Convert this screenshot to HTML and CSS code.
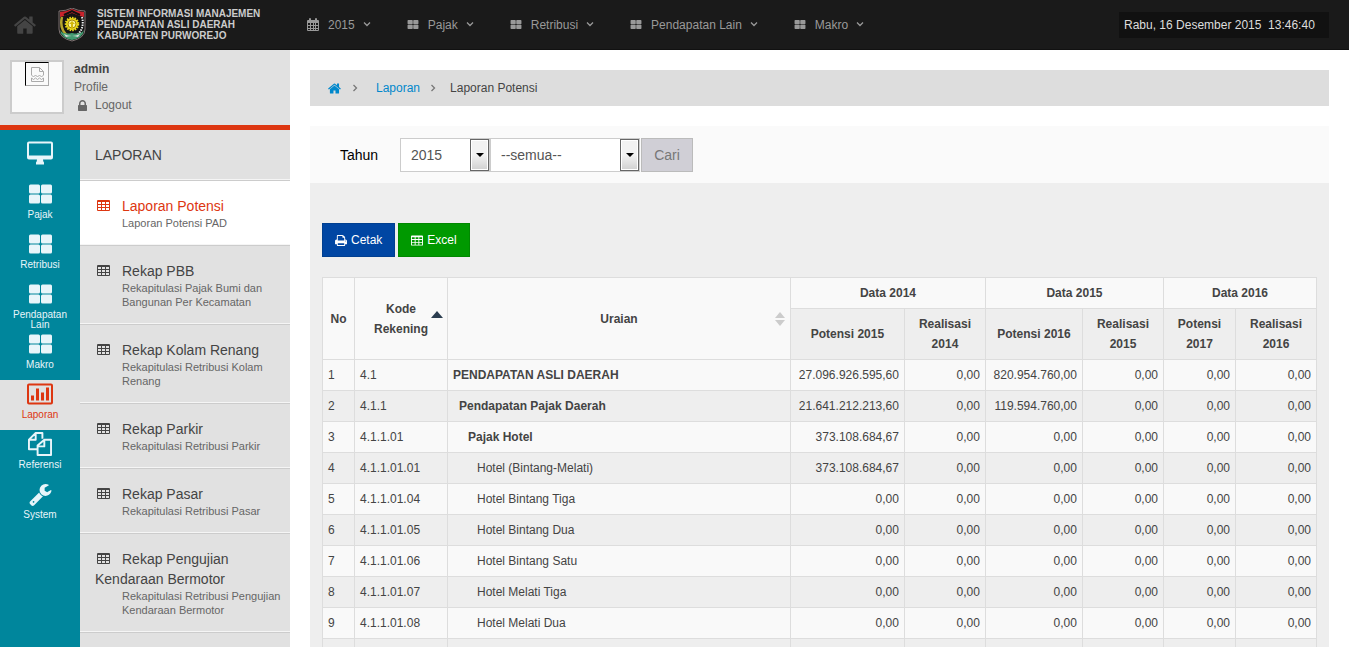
FILE: index.html
```
<!DOCTYPE html>
<html lang="id">

<head>
    <meta charset="utf-8">
    <meta name="viewport" content="width=device-width, initial-scale=1.0">
    <title>Laporan Potensi</title>
    <link rel="stylesheet" href="styles.css">
</head>

<body>

    <svg class="sprite" aria-hidden="true">
        <symbol id="i-home" viewBox="80 240 1640 1300"><path d="M1472 992v480q0 26-19 45t-45 19h-384v-384h-256v384h-384q-26 0-45-19t-19-45v-480q0-1 .5-3t.5-3l575-474 575 474q1 2 1 6zm223-69l-62 74q-8 9-21 11h-3q-13 0-21-7l-692-577-692 577q-12 8-24 7-13-2-21-11l-62-74q-8-10-7-23.5t11-21.5l719-599q32-26 76-26t76 26l244 204v-195q0-14 9-23t23-9h192q14 0 23 9t9 23v408l219 182q10 8 11 21.5t-7 23.5z"/></symbol>
        <symbol id="i-lock" viewBox="320 128 1152 1408"><path d="M640 768h512v-192q0-106-75-181t-181-75-181 75-75 181v192zm832 96v576q0 40-28 68t-68 28h-960q-40 0-68-28t-28-68v-576q0-40 28-68t68-28h32v-192q0-184 132-316t316-132 316 132 132 316v192h32q40 0 68 28t28 68z"/></symbol>
        <symbol id="i-print" viewBox="64 128 1664 1536"><path d="M448 1536h896v-256h-896v256zm0-640h896v-384h-160q-40 0-68-28t-28-68v-160h-640v640zm1152 64q0-26-19-45t-45-19-45 19-19 45 19 45 45 19 45-19 19-45zm128 0v416q0 13-9.5 22.5t-22.5 9.5h-224v160q0 40-28 68t-68 28h-960q-40 0-68-28t-28-68v-160h-224q-13 0-22.5-9.5t-9.5-22.5v-416q0-79 56.5-135.5t135.5-56.5h64v-544q0-40 28-68t68-28h672q40 0 88 20t76 48l152 152q28 28 48 76t20 88v256h64q79 0 135.5 56.5t56.5 135.5z"/></symbol>
        <symbol id="i-wrench" viewBox="80 128 1650 1650"><path d="M448 1472q0-26-19-45t-45-19-45 19-19 45 19 45 45 19 45-19 19-45zm644-420l-682 682q-37 37-90 37-52 0-91-37l-106-108q-38-36-38-90 0-53 38-91l681-681q39 98 114.5 173.5t173.5 114.5zm634-435q0 39-23 106-47 134-164.5 217.5t-258.5 83.5q-185 0-316.5-131.5t-131.5-316.5 131.5-316.5 316.5-131.5q58 0 121.5 16.5t107.5 46.5q16 11 16 28t-16 28l-293 169v224l193 107q5-3 79-48.5t135.5-81 70.5-35.5q15 0 23.5 10t8.500 25z"/></symbol>
        <symbol id="i-large" viewBox="0 0 23 19"><rect width="11" height="9" rx="1.5"/><rect x="12" width="11" height="9" rx="1.5"/><rect y="10" width="11" height="9" rx="1.5"/><rect x="12" y="10" width="11" height="9" rx="1.5"/></symbol>
        <symbol id="i-calendar" viewBox="0 0 12 13"><path fill-rule="evenodd" d="M1 2h1V1q0-1 1-1t1 1v1h4V1q0-1 1-1t1 1v1h1q1 0 1 1v9q0 1-1 1H1q-1 0-1-1V3q0-1 1-1zM1 5v2h2V5zm3 0v2h2V5zm3 0v2h1V5zm2 0v2h2V5zM1 8v2h2V8zm3 0v2h2V8zm3 0v2h1V8zm2 0v2h2V8zM1 11v1h2v-1zm3 0v1h2v-1zm3 0v1h1v-1zm2 0v1h2v-1z"/></symbol>
        <symbol id="i-table" viewBox="0 0 13 11"><path fill-rule="evenodd" d="M1 0h11q1 0 1 1v9q0 1-1 1H1q-1 0-1-1V1q0-1 1-1zM1 2v2h3V2zm4 0v2h3V2zm4 0v2h3V2zM1 5v2h3V5zm4 0v2h3V5zm4 0v2h3V5zM1 8v2h3V8zm4 0v2h3V8zm4 0v2h3V8z"/></symbol>
        <symbol id="i-desktop" viewBox="0 0 26 23"><path fill-rule="evenodd" d="M2 0h22q2 0 2 2v14q0 2-2 2h-8q0 2 1 3v2H9v-2q1-1 1-3H2q-2 0-2-2V2Q0 0 2 0zM2 2v12h22V2z"/></symbol>
        <symbol id="i-chart" viewBox="0 0 26 21"><path fill-rule="evenodd" d="M2 0h22q2 0 2 2v17q0 2-2 2H2q-2 0-2-2V2Q0 0 2 0zM2 2v17h22V2zM4 12h3v5H4zM9 5h3v12H9zM14 9h3v8h-3zM19 4h3v13h-3z"/></symbol>
        <symbol id="i-copy" viewBox="0 0 25 25"><path fill="none" stroke="currentColor" stroke-width="2" stroke-linejoin="round" d="M10 18H1V8l7-7h7v6M8 1v7H1M10 14l7-6h7v16H10zM17 8v7h-7"/></symbol>
        <symbol id="i-down" viewBox="0 0 8 5"><path fill="none" stroke="currentColor" stroke-width="1.3" d="M1 .5l3 3 3-3"/></symbol>
        <symbol id="i-right" viewBox="0 0 5 8"><path fill="none" stroke="currentColor" stroke-width="1.3" d="M.5 1l3 3-3 3"/></symbol>
    </svg>

    <header class="topbar">
        <a class="home" href="#" aria-label="Beranda"><svg><use href="#i-home"/></svg></a>
        <svg class="logo" viewBox="0 0 28 34" role="img" aria-label="Kabupaten Purworejo">
            <path d="M1 3q7 0 13-3 6 3 13 3v18q0 9-13 12Q1 30 1 21z" fill="#141414" stroke="#a99" stroke-width=".7"/>
            <path d="M2 4q6 0 12-3 6 3 12 3v5l-4-1-8-3-8 3-4 1z" fill="#c8242c"/>
            <path d="M6 7l8-4 8 4" fill="none" stroke="#111" stroke-width="2"/>
            <path d="M4 9q-3 12 6 19" fill="none" stroke="#b6a52d" stroke-width="2.5"/>
            <path d="M24 9q3 12-6 19" fill="none" stroke="#eee" stroke-width="2" stroke-dasharray="1.5 1"/>
            <path d="M2 22q3 5 12 3 9 2 12-3-1 8-12 10Q3 30 2 22z" fill="#439b70"/>
            <path d="M6 26q8 4 16 0l-2 3q-6-2-12 0z" fill="#ddd"/>
            <circle cx="14" cy="16" r="6" fill="#ead719" stroke="#ead719" stroke-width="2.5" stroke-dasharray="1.5 1"/>
            <circle cx="14" cy="16" r="4" fill="#f8f4a0" stroke="#a88b08"/>
            <path d="M14 13l3 3h-2v4h-2v-4h-2z" fill="#d3b80c"/>
        </svg>
        <div class="brand">SISTEM INFORMASI MANAJEMEN<br>PENDAPATAN ASLI DAERAH<br>KABUPATEN PURWOREJO</div>
        <nav class="topmenu">
            <a href="#"><svg class="cal"><use href="#i-calendar"/></svg>2015<svg class="down"><use href="#i-down"/></svg></a>
            <a href="#"><svg><use href="#i-large"/></svg>Pajak<svg class="down"><use href="#i-down"/></svg></a>
            <a href="#"><svg><use href="#i-large"/></svg>Retribusi<svg class="down"><use href="#i-down"/></svg></a>
            <a href="#"><svg><use href="#i-large"/></svg>Pendapatan Lain<svg class="down"><use href="#i-down"/></svg></a>
            <a href="#"><svg><use href="#i-large"/></svg>Makro<svg class="down"><use href="#i-down"/></svg></a>
        </nav>
        <div class="clock">Rabu, 16 Desember 2015&nbsp; 13:46:40</div>
    </header>

    <div class="page">
        <aside class="sidebar">
            <div class="profile">
                <div class="avatar">
                    <span class="photo">
                        <svg viewBox="0 0 13 15"><path fill="none" stroke="#aaa" d="M.5 8V.5h8l4 4V8M8.5.5v4h4M.5 8l2 2 2-2 2 2 2-2 2 2 2-2M.5 11v3.5h12V11l-2 1.5-2-1.5-2 1.5-2-1.5-2 1.5z"/></svg>
                    </span>
                </div>
                <div class="user">
                    <strong>admin</strong>
                    <a href="#">Profile</a>
                    <a href="#"><svg class="lock"><use href="#i-lock"/></svg>Logout</a>
                </div>
            </div>
            <div class="menus">
                <nav class="icons">
                    <a class="dashboard" href="#" aria-label="Dashboard"><svg class="wide"><use href="#i-desktop"/></svg></a>
                    <a href="#"><svg><use href="#i-large"/></svg><span>Pajak</span></a>
                    <a href="#"><svg><use href="#i-large"/></svg><span>Retribusi</span></a>
                    <a href="#"><svg><use href="#i-large"/></svg><span>Pendapatan Lain</span></a>
                    <a href="#"><svg><use href="#i-large"/></svg><span>Makro</span></a>
                    <a class="active" href="#"><svg class="wide"><use href="#i-chart"/></svg><span>Laporan</span></a>
                    <a href="#"><svg class="wide"><use href="#i-copy"/></svg><span>Referensi</span></a>
                    <a href="#"><svg class="wrench"><use href="#i-wrench"/></svg><span>System</span></a>
                </nav>
                <nav class="submenu">
                    <h2>LAPORAN</h2>
                    <a class="active" href="#"><svg><use href="#i-table"/></svg>Laporan Potensi<small>Laporan Potensi PAD</small></a>
                    <a href="#"><svg><use href="#i-table"/></svg>Rekap PBB<small>Rekapitulasi Pajak Bumi dan Bangunan Per Kecamatan</small></a>
                    <a href="#"><svg><use href="#i-table"/></svg>Rekap Kolam Renang<small>Rekapitulasi Retribusi Kolam Renang</small></a>
                    <a href="#"><svg><use href="#i-table"/></svg>Rekap Parkir<small>Rekapitulasi Retribusi Parkir</small></a>
                    <a href="#"><svg><use href="#i-table"/></svg>Rekap Pasar<small>Rekapitulasi Retribusi Pasar</small></a>
                    <a href="#"><svg><use href="#i-table"/></svg>Rekap Pengujian Kendaraan Bermotor<small>Rekapitulasi Retribusi Pengujian Kendaraan Bermotor</small></a>
                </nav>
            </div>
        </aside>

        <main>
            <nav class="breadcrumb">
                <a href="#" aria-label="Beranda"><svg class="crumb-home"><use href="#i-home"/></svg></a>
                <svg class="sep first"><use href="#i-right"/></svg>
                <a href="#">Laporan</a>
                <svg class="sep"><use href="#i-right"/></svg>
                <span>Laporan Potensi</span>
            </nav>

            <form class="filter">
                <label for="tahun">Tahun</label>
                <span class="select year">
                    <select id="tahun">
                        <option>2015</option>
                    </select>
                </span>
                <span class="select">
                    <select aria-label="Jenis">
                        <option>--semua--</option>
                    </select>
                </span>
                <button type="button">Cari</button>
            </form>

            <section class="report">
                <div class="actions">
                    <button class="cetak" type="button"><svg><use href="#i-print"/></svg>Cetak</button>
                    <button class="excel" type="button"><svg><use href="#i-table"/></svg>Excel</button>
                </div>

                <table>
                    <colgroup>
                        <col class="c-no">
                        <col class="c-kode">
                        <col>
                        <col class="c-total">
                        <col class="c-real">
                        <col class="c-pot">
                        <col class="c-real">
                        <col class="c-next">
                        <col class="c-real">
                    </colgroup>
                    <thead>
                        <tr>
                            <th rowspan="2">No</th>
                            <th rowspan="2" class="sort asc">Kode Rekening</th>
                            <th rowspan="2" class="sort both">Uraian</th>
                            <th colspan="2">Data 2014</th>
                            <th colspan="2">Data 2015</th>
                            <th colspan="2">Data 2016</th>
                        </tr>
                        <tr>
                            <th>Potensi 2015</th>
                            <th>Realisasi 2014</th>
                            <th>Potensi 2016</th>
                            <th>Realisasi 2015</th>
                            <th>Potensi 2017</th>
                            <th>Realisasi 2016</th>
                        </tr>
                    </thead>
                    <tbody>
                        <tr><td>1</td><td>4.1</td><td class="l1">PENDAPATAN ASLI DAERAH</td><td>27.096.926.595,60</td><td>0,00</td><td>820.954.760,00</td><td>0,00</td><td>0,00</td><td>0,00</td></tr>
                        <tr><td>2</td><td>4.1.1</td><td class="l2">Pendapatan Pajak Daerah</td><td>21.641.212.213,60</td><td>0,00</td><td>119.594.760,00</td><td>0,00</td><td>0,00</td><td>0,00</td></tr>
                        <tr><td>3</td><td>4.1.1.01</td><td class="l3">Pajak Hotel</td><td>373.108.684,67</td><td>0,00</td><td>0,00</td><td>0,00</td><td>0,00</td><td>0,00</td></tr>
                        <tr><td>4</td><td>4.1.1.01.01</td><td class="l4">Hotel (Bintang-Melati)</td><td>373.108.684,67</td><td>0,00</td><td>0,00</td><td>0,00</td><td>0,00</td><td>0,00</td></tr>
                        <tr><td>5</td><td>4.1.1.01.04</td><td class="l4">Hotel Bintang Tiga</td><td>0,00</td><td>0,00</td><td>0,00</td><td>0,00</td><td>0,00</td><td>0,00</td></tr>
                        <tr><td>6</td><td>4.1.1.01.05</td><td class="l4">Hotel Bintang Dua</td><td>0,00</td><td>0,00</td><td>0,00</td><td>0,00</td><td>0,00</td><td>0,00</td></tr>
                        <tr><td>7</td><td>4.1.1.01.06</td><td class="l4">Hotel Bintang Satu</td><td>0,00</td><td>0,00</td><td>0,00</td><td>0,00</td><td>0,00</td><td>0,00</td></tr>
                        <tr><td>8</td><td>4.1.1.01.07</td><td class="l4">Hotel Melati Tiga</td><td>0,00</td><td>0,00</td><td>0,00</td><td>0,00</td><td>0,00</td><td>0,00</td></tr>
                        <tr><td>9</td><td>4.1.1.01.08</td><td class="l4">Hotel Melati Dua</td><td>0,00</td><td>0,00</td><td>0,00</td><td>0,00</td><td>0,00</td><td>0,00</td></tr>
                        <tr><td>&nbsp;</td><td></td><td></td><td></td><td></td><td></td><td></td><td></td><td></td></tr>
                    </tbody>
                </table>
            </section>
        </main>
    </div>

</body>

</html>
```
FILE: styles.css
```
* {
    box-sizing: border-box;
}

body {
    margin: 0;
    height: 100vh;
    overflow: hidden;
    display: flex;
    flex-direction: column;
    background: #fff;
    color: #444;
    font: 12px/20px "Liberation Sans", Arial, sans-serif;
}

a {
    color: inherit;
    text-decoration: none;
}

button,
select {
    font-family: inherit;
}

svg {
    fill: currentColor;
    flex: none;
}

.sprite {
    display: none;
}

/* top bar */
.topbar {
    display: flex;
    align-items: center;
    flex: none;
    height: 50px;
    padding: 0 20px 0 14px;
    background: #1a1a1a;
    border-bottom: 1px solid #111;
}

.home {
    display: flex;
    margin-right: 22px;
    color: #444;
}

.home svg {
    width: 22px;
    height: 18px;
}

.logo {
    width: 28px;
    height: 34px;
    margin-right: 11px;
}

.brand {
    width: 210px;
    color: #ccc;
    font-size: 10px;
    font-weight: bold;
    line-height: 11px;
}

.topmenu {
    display: flex;
    flex: 1;
    gap: 36px;
    color: #999;
}

.topmenu a {
    display: flex;
    align-items: center;
    white-space: nowrap;
}

.topmenu svg {
    width: 12px;
    height: 9px;
    margin-right: 9px;
}

.topmenu .cal {
    height: 13px;
}

.topmenu .down {
    width: 8px;
    height: 5px;
    margin: 0 0 0 8px;
}

.clock {
    min-width: 210px;
    padding: 3px 5px;
    background: #111;
    color: #ddd;
    white-space: nowrap;
}

/* sidebar */
.page {
    display: flex;
    flex: 1;
    min-height: 0;
}

.sidebar {
    display: flex;
    flex-direction: column;
    flex: none;
    width: 290px;
    background: #e1e1e1;
}

.profile {
    display: flex;
    gap: 10px;
    height: 80px;
    padding: 10px;
    border-bottom: 5px solid #dd3611;
}

.avatar {
    width: 54px;
    height: 54px;
    border: 2px solid #ccc;
    background: #fafafa;
}

.photo {
    display: flex;
    align-items: center;
    justify-content: center;
    width: 24px;
    height: 24px;
    margin: 0 auto;
    border: 1px solid #000;
    border-right-color: #aaa;
    border-bottom-color: #aaa;
}

.photo svg {
    width: 13px;
    height: 15px;
}

.user {
    display: flex;
    flex-direction: column;
    color: #666;
    line-height: 18px;
}

.user strong {
    color: #444;
}

.user a {
    display: flex;
    align-items: center;
}

.lock {
    width: 9px;
    height: 11px;
    margin: 0 8px 0 4px;
}

.menus {
    display: flex;
    flex: 1;
    min-height: 0;
}

.icons {
    width: 80px;
    background: #00869c;
    color: #e8f5fa;
    font-size: 10px;
    line-height: 10px;
    text-align: center;
}

.icons a {
    display: flex;
    flex-direction: column;
    align-items: center;
    height: 50px;
    padding: 0 8px;
}

.icons svg {
    width: 23px;
    height: 20px;
    margin: 4px 0 6px;
}

.icons .wide {
    width: 26px;
    height: 24px;
    margin: 2px 0 4px;
}

.icons .wrench {
    height: 22px;
    margin-bottom: 4px;
}

.icons .dashboard {
    padding-top: 9px;
}

.icons .active {
    background: #e1e1e1;
    color: #dd3611;
}

.submenu {
    flex: 1;
}

.submenu h2 {
    height: 51px;
    margin: 0;
    padding: 0 15px;
    border-bottom: 1px solid #ccc;
    box-shadow: inset 0 -1px #f5f5f5;
    font-size: 14px;
    font-weight: normal;
    line-height: 50px;
}

.submenu a {
    display: block;
    padding: 15px 8px 15px 15px;
    border-bottom: 1px solid #ccc;
    box-shadow: inset 0 -1px #f5f5f5;
    font-size: 14px;
}

.submenu a svg {
    width: 13px;
    height: 11px;
    margin: 0 12px 0 2px;
}

.submenu small {
    display: block;
    padding-left: 27px;
    color: #666;
    font-size: 11px;
    line-height: 14px;
}

.submenu .active {
    background: #fff;
    color: #dd3611;
}

/* content */
main {
    display: flex;
    flex-direction: column;
    flex: 1;
    min-width: 0;
    padding: 20px 20px 0;
}

.breadcrumb {
    display: flex;
    align-items: center;
    flex: none;
    height: 36px;
    margin-bottom: 20px;
    padding: 0 18px;
    background: #ddd;
}

.breadcrumb a {
    color: #0088cc;
}

.crumb-home {
    display: block;
    width: 13px;
    height: 11px;
}

.sep {
    width: 5px;
    height: 8px;
    margin: 0 14px 0 11px;
    color: #777;
}

.sep.first {
    margin: 0 18px 0 12px;
}

.filter {
    display: flex;
    align-items: center;
    flex: none;
    height: 57px;
    padding-left: 30px;
    background: #fafafa;
    color: #000;
    font-size: 14px;
}

.filter label {
    width: 60px;
}

.select {
    position: relative;
    width: 150px;
    height: 34px;
}

.select.year {
    width: 90px;
}

.select select {
    appearance: none;
    width: 100%;
    height: 100%;
    padding: 0 20px 0 10px;
    border: 1px solid #ccc;
    border-radius: 0;
    background: #fff;
    color: #555;
    font-size: 14px;
}

/* drop-down arrow */
.select::before {
    content: "";
    position: absolute;
    top: 1px;
    right: 1px;
    bottom: 1px;
    width: 17px;
    border: 1px solid #666;
    background: linear-gradient(#f2f2f2 50%, #d0d0d0);
    box-shadow: inset 0 0 0 1px #fff;
    pointer-events: none;
}

.select::after {
    content: "";
    position: absolute;
    top: 15px;
    right: 6px;
    border: 4px solid transparent;
    border-top-color: #000;
    border-bottom: 0;
    pointer-events: none;
}

.filter button {
    width: 52px;
    height: 34px;
    margin-left: 1px;
    padding: 0;
    border: 1px solid #bbb;
    background: #d0cfd6;
    color: #777;
    font-size: 14px;
}

.report {
    flex: 1;
    min-height: 0;
    padding: 40px 12px 0;
    background: #eee;
    overflow: hidden;
}

.actions {
    display: flex;
    gap: 3px;
    margin-bottom: 20px;
}

.actions button {
    display: flex;
    align-items: center;
    gap: 4px;
    height: 34px;
    padding: 0 12px;
    border: 1px solid #003f90;
    background: #0046a3;
    color: #fff;
    font-size: 12px;
}

.actions svg {
    width: 12px;
    height: 11px;
}

.actions .excel {
    border-color: #008800;
    background: #009900;
}

table {
    width: 100%;
    table-layout: fixed;
    border-collapse: collapse;
}

.c-no {
    width: 32px;
}

.c-kode {
    width: 93px;
}

.c-total {
    width: 114px;
}

.c-real {
    width: 81px;
}

.c-pot {
    width: 97px;
}

.c-next {
    width: 72px;
}

th,
td {
    padding: 5px;
    border: 1px solid #ddd;
}

tr:nth-child(odd) {
    background: #f9f9f9;
}

tr:nth-child(even) {
    background: #eee;
}

td:nth-child(n+4) {
    text-align: right;
}

.sort {
    position: relative;
    padding: 5px 18px;
}

.asc::after {
    content: "";
    position: absolute;
    top: 33px;
    right: 4px;
    border: 6px solid transparent;
    border-top: 0;
    border-bottom: 7px solid #2c3e50;
}

.both::before,
.both::after {
    content: "";
    position: absolute;
    right: 5px;
    border: 5px solid transparent;
}

.both::before {
    top: 34px;
    border-top: 0;
    border-bottom: 6px solid #ccc;
}

.both::after {
    top: 42px;
    border-top: 6px solid #ccc;
    border-bottom: 0;
}

.l1,
.l2,
.l3 {
    font-weight: bold;
}

.l2 {
    padding-left: 11px;
}

.l3 {
    padding-left: 20px;
}

.l4 {
    padding-left: 29px;
}
```
